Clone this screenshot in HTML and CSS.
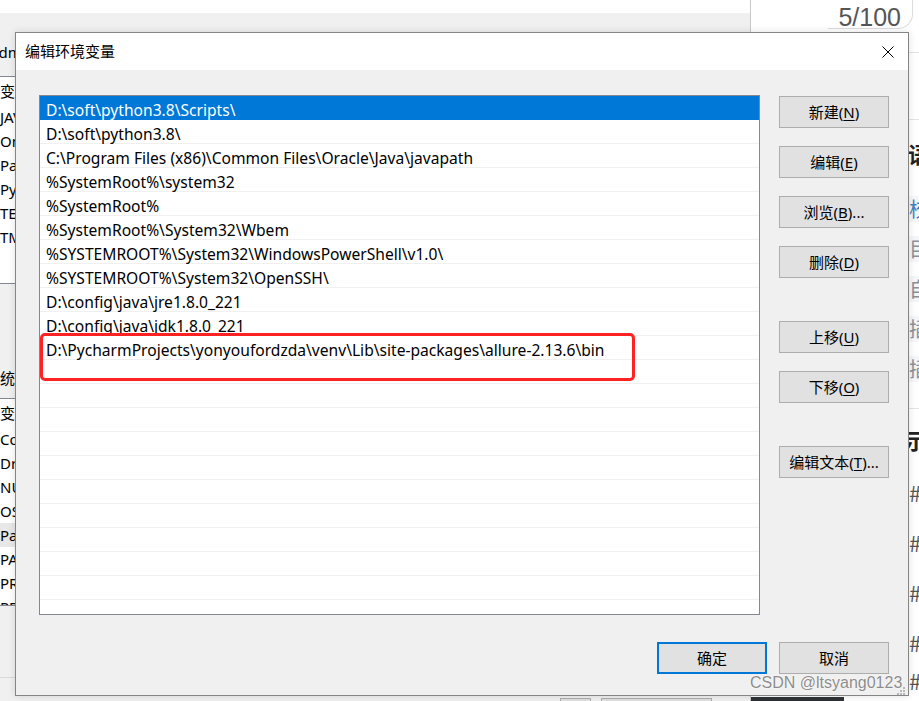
FILE: index.html
```html
<!DOCTYPE html>
<html lang="zh-CN">
<head>
<meta charset="utf-8">
<title>编辑环境变量</title>
<link rel="stylesheet" href="styles.css">
</head>
<body>
<div class="screen">
  <div class="bgwin">
    <div class="bg-topstrip"></div>
    <div class="bg-label bg-label-user"><span class="bg-label-text">Administrator 的用户变量(U)</span></div>
    <div class="lv lv-user">
      <div class="lv-head">变量</div>
      <div class="lv-row">JAVA_HOME</div>
      <div class="lv-row">OneDrive</div>
      <div class="lv-row">Path</div>
      <div class="lv-row">PyCharm</div>
      <div class="lv-row">TEMP</div>
      <div class="lv-row">TMP</div>
    </div>
    <div class="bg-label bg-label-sys"><span class="bg-label-text">系统变量(S)</span></div>
    <div class="lv lv-sys">
      <div class="lv-head">变量</div>
      <div class="lv-row">ComSpec</div>
      <div class="lv-row">DriverData</div>
      <div class="lv-row">NUMBER_OF_PROCESSORS</div>
      <div class="lv-row">OS</div>
      <div class="lv-row lv-row-hl">Path</div>
      <div class="lv-row">PATHEXT</div>
      <div class="lv-row">PROCESSOR_ARCHITECTURE</div>
      <div class="lv-row">PROCESSOR_IDENTIFIER</div>
    </div>
    <div class="bg-sep"></div>
    <div class="bg-buttons"><span class="bg-btn bg-btn-a"></span><span class="bg-btn bg-btn-b"></span></div>
  </div>

  <div class="webpage">
    <div class="wp-top"><span class="wp-counter">5/100</span></div>
    <div class="wp-line wp-line-a"></div>
    <div class="wp-line wp-line-b"></div>
    <div class="wp-heading">语</div>
    <div class="wp-rows">
      <div class="wp-row wp-row-blue">校</div>
      <div class="wp-row">目</div>
      <div class="wp-row">自</div>
      <div class="wp-row">插</div>
      <div class="wp-row">插</div>
    </div>
    <div class="wp-line wp-line-c"></div>
    <div class="wp-heading wp-heading-b">示</div>
    <div class="wp-hashes">
      <div class="wp-hash">#</div>
      <div class="wp-hash">#</div>
      <div class="wp-hash">#</div>
      <div class="wp-hash">#</div>
      <div class="wp-hash wp-hash-last">#</div>
    </div>
    <div class="wp-darkbtn"></div>
  </div>

  <div class="dialog">
    <div class="titlebar">
      <span class="title">编辑环境变量</span>
      <svg class="close" width="12" height="12" viewBox="0 0 12 12"><path d="M0.5 0.5 L11.5 11.5 M11.5 0.5 L0.5 11.5" stroke="#000" stroke-width="1" fill="none"/></svg>
    </div>
    <div class="dlg-body">
      <div class="dlg-main">
        <div class="pathlist">
          <div class="item item-selected">D:\soft\python3.8\Scripts\</div>
          <div class="item">D:\soft\python3.8\</div>
          <div class="item">C:\Program Files (x86)\Common Files\Oracle\Java\javapath</div>
          <div class="item">%SystemRoot%\system32</div>
          <div class="item">%SystemRoot%</div>
          <div class="item">%SystemRoot%\System32\Wbem</div>
          <div class="item">%SYSTEMROOT%\System32\WindowsPowerShell\v1.0\</div>
          <div class="item">%SYSTEMROOT%\System32\OpenSSH\</div>
          <div class="item">D:\config\java\jre1.8.0_221</div>
          <div class="item">D:\config\java\jdk1.8.0_221</div>
          <div class="item">D:\PycharmProjects\yonyoufordzda\venv\Lib\site-packages\allure-2.13.6\bin</div>
          <div class="item"></div>
          <div class="item"></div>
          <div class="item"></div>
          <div class="item"></div>
          <div class="item"></div>
          <div class="item"></div>
          <div class="item"></div>
          <div class="item"></div>
          <div class="item"></div>
          <div class="item"></div>
          <div class="item"></div>
          <div class="mark"></div>
        </div>
        <div class="side-buttons">
          <button class="btn">新建(<u>N</u>)</button>
          <button class="btn">编辑(<u>E</u>)</button>
          <button class="btn">浏览(<u>B</u>)...</button>
          <button class="btn">删除(<u>D</u>)</button>
          <button class="btn btn-group">上移(<u>U</u>)</button>
          <button class="btn">下移(<u>O</u>)</button>
          <button class="btn btn-group">编辑文本(<u>T</u>)...</button>
        </div>
      </div>
      <div class="dlg-footer">
        <button class="btn btn-default">确定</button>
        <button class="btn">取消</button>
      </div>
    </div>
  </div>

  <div class="watermark">CSDN @ltsyang0123</div>
  <svg class="grip" width="11" height="8" viewBox="0 0 11 8">
    <rect x="8" y="0" width="2" height="2" fill="#b8b8b8"/>
    <rect x="5" y="3" width="2" height="2" fill="#b8b8b8"/>
    <rect x="8" y="3" width="2" height="2" fill="#b8b8b8"/>
    <rect x="2" y="6" width="2" height="2" fill="#b8b8b8"/>
    <rect x="5" y="6" width="2" height="2" fill="#b8b8b8"/>
    <rect x="8" y="6" width="2" height="2" fill="#b8b8b8"/>
  </svg>
</div>
</body>
</html>
```

FILE: styles.css
```css
* { box-sizing: border-box; }
html, body { margin: 0; padding: 0; }
body {
  background: #f0f0f0;
  font-family: "Noto Sans", "Noto Sans CJK SC", sans-serif;
  color: #000;
}
.screen {
  position: relative;
  width: 919px;
  height: 701px;
  overflow: hidden;
  background: #f0f0f0;
}

/* ---------- background window (left) ---------- */
.bgwin {
  position: absolute;
  left: 0;
  top: 0;
  width: 750px;
  height: 701px;
  background: #f0f0f0;
  display: flex;
  flex-direction: column;
  font-size: 15px;
}
.bg-topstrip { height: 13px; background: #fff; flex: none; }
.bg-label {
  flex: none;
  width: 15px;
  height: 20px;
  line-height: 20px;
  overflow: hidden;
  white-space: nowrap;
}
.bg-label-text { display: block; }
.bg-label-user { margin-top: 29px; }
.bg-label-user .bg-label-text { margin-left: -11px; }
.bg-label-sys { margin-top: 84px; }
.bg-label-sys .bg-label-text { margin-left: -15px; }
.lv {
  flex: none;
  width: 16px;
  height: 208px;
  background: #fff;
  border-top: 1px solid #828790;
  border-bottom: 1px solid #828790;
  overflow: hidden;
}
.lv-user { margin-top: 14px; }
.lv-sys { margin-top: 10px; }
.lv-head { height: 28px; line-height: 28px; white-space: nowrap; }
.lv-row { height: 24px; line-height: 24px; white-space: nowrap; }
.lv-row-hl { background: #e8e8e8; }
.bg-sep { flex: none; height: 1px; background: #dadada; margin-top: 71px; }
.bg-buttons { flex: none; margin-top: 20px; display: flex; gap: 10px; padding-left: 560px; }
.bg-btn { height: 22px; border: 1px solid #adadad; background: #e1e1e1; }
.bg-btn-a { width: 31px; }
.bg-btn-b { width: 111px; }

/* ---------- background web page (right) ---------- */
.webpage {
  position: absolute;
  left: 750px;
  top: 0;
  width: 169px;
  height: 701px;
  background: #fff;
  border-left: 1px solid #c9c9c9;
  display: flex;
  flex-direction: column;
  font-family: "Noto Sans CJK SC", sans-serif;
}
.wp-top {
  flex: none;
  height: 33px;
  display: flex;
  justify-content: flex-end;
  padding-right: 6px;
}
.wp-counter {
  height: 31px;
  margin-top: -2px;
  padding: 6px 11px 0 10px;
  border: 1px solid #dcdcdc;
  border-left: none;
  border-top: none;
  border-radius: 0 0 15px 0;
  font-family: "Liberation Sans", Arial, sans-serif;
  font-size: 25px;
  line-height: 26px;
  color: #555;
}
.wp-line { flex: none; height: 1px; background: #e4e4e4; margin-left: 158px; }
.wp-line-a { margin-top: 19px; }
.wp-line-b { margin-top: 66px; }
.wp-line-c { margin-top: 26px; }
.wp-heading {
  flex: none;
  margin-top: 20px;
  padding-left: 157px;
  font-size: 22px;
  line-height: 26px;
  font-weight: 700;
  color: #222;
  white-space: nowrap;
}
.wp-heading-b { margin-top: 17px; padding-left: 154px; }
.wp-rows { flex: none; margin-top: 30px; display: flex; flex-direction: column; gap: 14px; }
.wp-row {
  height: 26px;
  line-height: 26px;
  margin-left: 158px;
  background: #f4f6f9;
  font-size: 20px;
  color: #8a8f99;
  white-space: nowrap;
}
.wp-row-blue { color: #3d7fc1; }
.wp-hashes {
  flex: none;
  margin-top: 27px;
  display: flex;
  flex-direction: column;
  gap: 24px;
}
.wp-hash {
  height: 26px;
  line-height: 26px;
  padding-left: 158px;
  font-size: 22px;
  color: #555;
}
.wp-hash-last { margin-top: -12px; }
.wp-darkbtn { margin-top: auto; flex: none; width: 93px; height: 4px; background: #2f3237; }

/* ---------- dialog ---------- */
.dialog {
  position: absolute;
  left: 15px;
  top: 32px;
  width: 894px;
  height: 664px;
  border: 1px solid #858585;
  background: #f0f0f0;
  display: flex;
  flex-direction: column;
  box-shadow: 0 0 8px rgba(0,0,0,0.12);
}
.titlebar {
  flex: none;
  height: 37px;
  background: #fff;
  display: flex;
  align-items: center;
  padding-left: 9px;
  padding-right: 14px;
}
.title {
  font-family: "Noto Sans CJK SC", sans-serif;
  font-size: 15px;
  line-height: 20px;
  margin-top: -1px;
}
.close { margin-left: auto; display: block; }

.dlg-body {
  flex: 1;
  display: flex;
  flex-direction: column;
  padding: 25px 19px 21px 23px;
}
.dlg-main {
  display: flex;
  gap: 19px;
  align-items: flex-start;
}
.pathlist {
  position: relative;
  width: 721px;
  height: 520px;
  background: #fff;
  border: 1px solid #828790;
  overflow: hidden;
  flex: none;
}
.item {
  height: 24px;
  padding-top: 3px;
  line-height: 22px;
  padding-left: 6px;
  border-bottom: 1px solid #f0f0f0;
  font-size: 15.6px;
  white-space: nowrap;
}
.item-selected {
  background: #0078d7;
  color: #fff;
  border-bottom-color: #0078d7;
}
.mark {
  position: absolute;
  left: 0;
  top: 237px;
  width: 595px;
  height: 48px;
  border: 3px solid #ff2222;
  border-radius: 5px;
}

.side-buttons {
  display: flex;
  flex-direction: column;
  gap: 18px;
  margin-top: 1px;
}
.btn {
  width: 110px;
  height: 32px;
  padding: 0;
  margin: 0;
  border: 1px solid #adadad;
  background: #e1e1e1;
  color: #000;
  font-family: "Noto Sans", "Noto Sans CJK SC", sans-serif;
  font-size: 15px;
  line-height: 20px;
  display: flex;
  align-items: center;
  justify-content: center;
  white-space: nowrap;
}
.btn u { text-decoration-thickness: 1px; text-underline-offset: 2px; }
.btn-group { margin-top: 25px; }
.btn-default { border: 2px solid #0078d7; }

.dlg-footer {
  margin-top: auto;
  display: flex;
  justify-content: flex-end;
  gap: 12px;
}

/* ---------- overlays ---------- */
.watermark {
  position: absolute;
  left: 750px;
  top: 672px;
  font-family: "Liberation Sans", Arial, sans-serif;
  font-size: 16px;
  line-height: 22px;
  color: #8c8c8c;
  text-shadow: 0 0 2px #fff, 0 0 1px #fff;
  white-space: nowrap;
}
.grip { position: absolute; left: 895px; top: 687px; }
```
